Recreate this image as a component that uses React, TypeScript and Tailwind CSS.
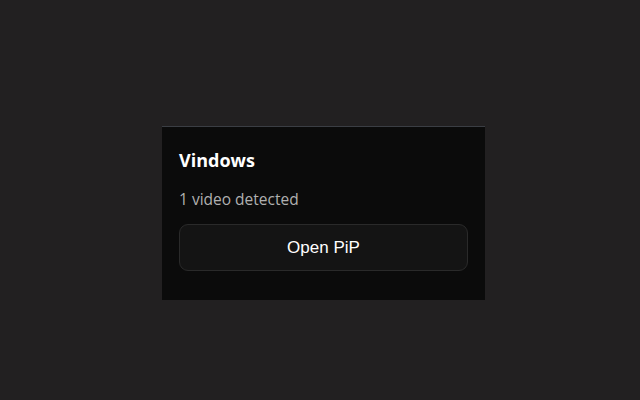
export default function App() {
  return (
    <div className="w-[640px] h-[400px] bg-[#222021] pt-[126px] pl-[162px]">
      <div className="w-[323px] h-[174px] bg-[#0b0b0b] border-t border-[#3b3e44] px-[17px] pt-[21px] font-['Open_Sans',sans-serif]">
        <h1 className="text-[18px] font-bold leading-[24px] text-white">Vindows</h1>
        <p className="mt-[17px] text-[15.5px] leading-[20px] text-[#b0b0b0]">1 video detected</p>
        <button className="mt-[15px] w-full h-[47px] rounded-[9px] border border-[#2a2a2a] bg-[#141414] text-white text-[17px] font-['Liberation_Sans',Arial,sans-serif]">
          Open PiP
        </button>
      </div>
    </div>
  );
}
